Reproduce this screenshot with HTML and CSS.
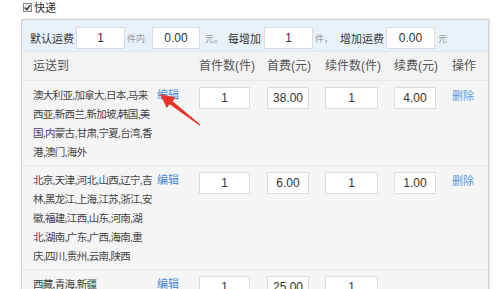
FILE: index.html
```html
<!DOCTYPE html>
<html lang="zh-CN">
<head>
    <meta charset="UTF-8">
    <meta name="viewport" content="width=device-width, initial-scale=1.0">
    <title>运费模板</title>
    <link rel="stylesheet" href="styles.css">
</head>
<body>
    <div class="express">
        <span class="check">
            <svg width="7" height="7" viewBox="0 0 7 7"><path d="M0.8 3.6 L2.7 5.6 L6.2 1.2" fill="none" stroke="#333" stroke-width="1.4"/></svg>
        </span>
        <span>快递</span>
    </div>
    <div class="panel">
        <div class="defaults">
            <span class="lbl">默认运费</span>
            <input class="field w49 m2" type="text" value="1">
            <span class="unit m2">件内</span>
            <input class="field w48 m7" type="text" value="0.00">
            <span class="unit m5">元。</span>
            <span class="lbl m5">每增加</span>
            <input class="field w49 m3" type="text" value="1">
            <span class="unit m2">件，</span>
            <span class="lbl m7">增加运费</span>
            <input class="field w49 m2" type="text" value="0.00">
            <span class="unit m3">元</span>
        </div>

        <div class="row head">
            <div class="area">运送到</div>
            <div>首件数(件)</div>
            <div>首费(元)</div>
            <div>续件数(件)</div>
            <div>续费(元)</div>
            <div>操作</div>
        </div>

        <div class="row">
            <div class="area">
                <p>澳大利亚,加拿大,日本,马来<br>西亚,新西兰,新加坡,韩国,美<br>国,内蒙古,甘肃,宁夏,台湾,香<br>港,澳门,海外</p>
                <a href="#">编辑</a>
            </div>
            <div><input class="field c1" type="text" value="1"></div>
            <div><input class="field c2" type="text" value="38.00"></div>
            <div><input class="field c3" type="text" value="1"></div>
            <div><input class="field c4" type="text" value="4.00"></div>
            <div><a href="#" class="del">删除</a></div>
        </div>

        <div class="row">
            <div class="area">
                <p>北京,天津,河北,山西,辽宁,吉<br>林,黑龙江,上海,江苏,浙江,安<br>徽,福建,江西,山东,河南,湖<br>北,湖南,广东,广西,海南,重<br>庆,四川,贵州,云南,陕西</p>
                <a href="#">编辑</a>
            </div>
            <div><input class="field c1" type="text" value="1"></div>
            <div><input class="field c2" type="text" value="6.00"></div>
            <div><input class="field c3" type="text" value="1"></div>
            <div><input class="field c4" type="text" value="1.00"></div>
            <div><a href="#" class="del">删除</a></div>
        </div>

        <div class="row">
            <div class="area">
                <p>西藏,青海,新疆</p>
                <a href="#">编辑</a>
            </div>
            <div><input class="field c1" type="text" value="1"></div>
            <div><input class="field c2" type="text" value="25.00"></div>
            <div><input class="field c3" type="text" value="1"></div>
            <div></div>
            <div></div>
        </div>

        <!-- red pointer over the first 编辑 link -->
        <svg class="arrow" width="55" height="42" viewBox="0 0 55 42">
            <polygon points="9,6 24.5,9.5 21.6,13.2 49.3,36.6 48.5,37.6 18.6,16.2 15.8,20" fill="#e6332a"/>
        </svg>
    </div>
</body>
</html>
```

FILE: styles.css
```css
body {
    margin: 0;
    font-family: "Liberation Sans", "Noto Sans CJK SC", sans-serif;
    font-size: 11px;
    color: #444;
    background: #fff;
}

.express {
    display: flex;
    align-items: center;
    height: 14px;
    margin: 0 0 5px 23px;
    gap: 2px;
    color: #333;
}

.check {
    width: 7px;
    height: 7px;
    border: 1px solid #8a8a8a;
    background: #eee;
    display: flex;
    align-items: center;
    justify-content: center;
}

.panel {
    position: relative;
    margin-left: 21px;
    width: 466px;
    border: 1px solid #d2d2d2;
    border-bottom: none;
    box-shadow: 1px 0 2px rgba(0, 0, 0, 0.12);
    background: #f5f5f5;
}

.defaults {
    display: flex;
    align-items: center;
    padding: 7px 8px 2px;
    background: #e8f0fa;
    border-bottom: 1px solid #e2e8ef;
}

.defaults .lbl {
    color: #333;
    font-size: 11px;
    white-space: nowrap;
}

.defaults .unit {
    color: #999;
    font-size: 9px;
    white-space: nowrap;
}

.m2 { margin-left: 2px; }
.m3 { margin-left: 3px; }
.m5 { margin-left: 5px; }
.m7 { margin-left: 7px; }

.field {
    box-sizing: border-box;
    height: 22px;
    border: 1px solid #dcdcdc;
    background: #fff;
    text-align: center;
    font-family: "Liberation Sans", sans-serif;
    font-size: 12px;
    color: #333;
    padding: 0;
    outline: none;
    flex: none;
}

.w49 { width: 49px; }
.w48 { width: 48px; }
.c1 { width: 51px; }
.c2 { width: 42px; }
.c3 { width: 53px; }
.c4 { width: 42px; }

.row {
    display: grid;
    grid-template-columns: 177px 68px 58px 69px 58px 1fr;
    padding: 5px 0 3px;
    border-bottom: 1px solid #e9e9e9;
    line-height: 19px;
}

.row > div:not(.area) {
    padding-top: 1px;
}

.row.head {
    padding: 0;
    line-height: 28px;
    font-size: 12px;
    color: #555;
    background: #f3f3f3;
}

.row.head > div {
    padding-top: 0;
}

.area {
    display: flex;
    align-items: flex-start;
    padding-left: 11px;
}

.area p {
    margin: 0;
    width: 124px;
    flex: none;
    white-space: nowrap;
    font-size: 10.5px;
    letter-spacing: -0.7px;
    color: #444;
}

a {
    color: #3f8bd8;
    text-decoration: none;
}

.del {
    line-height: 19px;
    color: #5a9be0;
}

.arrow {
    position: absolute;
    left: 129px;
    top: 68px;
}
```
